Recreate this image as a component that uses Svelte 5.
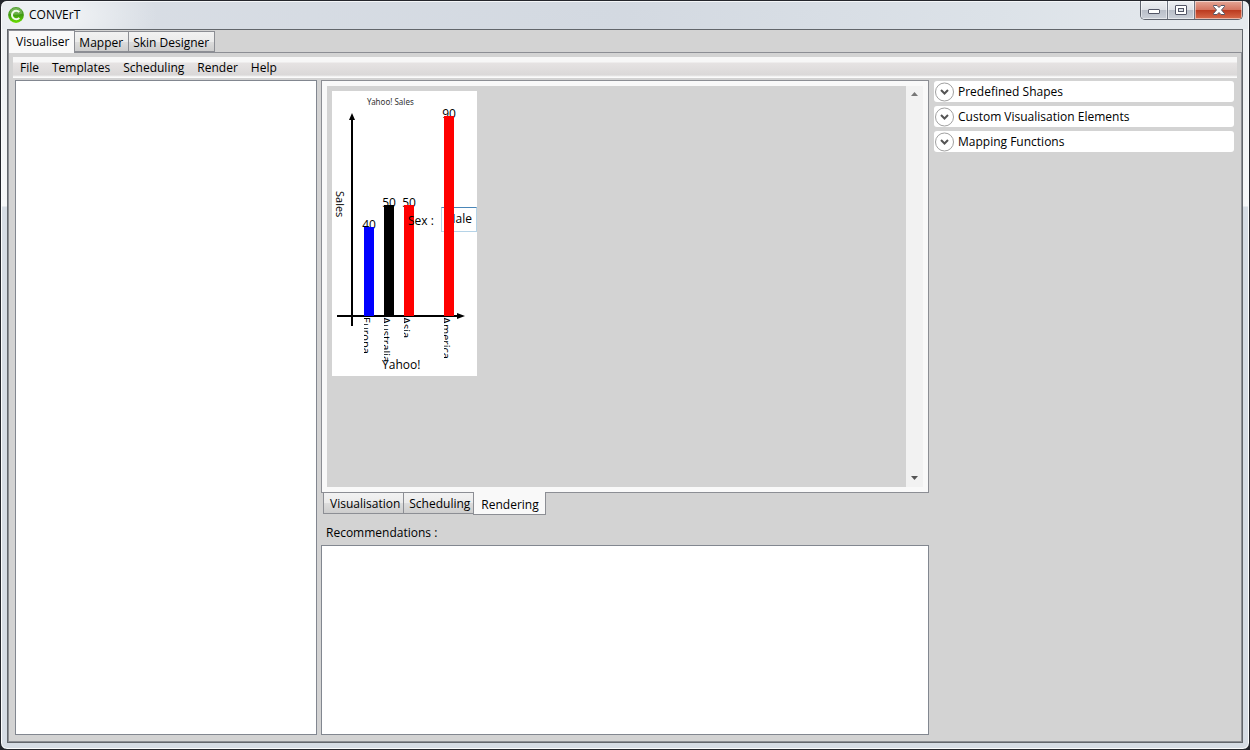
<script>
  let mainTab = $state('Visualiser');
  let viewTab = $state('Rendering');
  let sex = $state('Male');

  const mainTabs = ['Visualiser', 'Mapper', 'Skin Designer'];
  const viewTabs = ['Visualisation', 'Scheduling', 'Rendering'];
  const menus = ['File', 'Templates', 'Scheduling', 'Render', 'Help'];
  const groups = ['Predefined Shapes', 'Custom Visualisation Elements', 'Mapping Functions'];
  const bars = [
    { name: 'Europa', value: 40, x: 32, top: 136, color: '#0000ff' },
    { name: 'Australia', value: 50, x: 52, top: 114, color: '#000000' },
    { name: 'Asia', value: 50, x: 72, top: 114, color: '#ff0000' },
    { name: 'America', value: 90, x: 112, top: 25, color: '#ff0000' }
  ];
</script>

<div class="window">
  <header class="titlebar">
    <svg class="logo" width="16" height="16" viewBox="0 0 16 16" aria-hidden="true">
      <defs>
        <linearGradient id="ball" x1="0" y1="0" x2="0" y2="1">
          <stop offset="0" stop-color="#4f9e2c" />
          <stop offset="0.5" stop-color="#3f9a10" />
          <stop offset="1" stop-color="#6be000" />
        </linearGradient>
      </defs>
      <circle cx="8" cy="8" r="7.9" fill="url(#ball)" />
      <path d="M1.500 6.500a6.600 6.600 0 0 1 13 0q-6.500 2.500-13 0z" fill="#fff" opacity=".22" />
      <path d="M11.300 5.200A4.200 4.200 0 1 0 11.300 10.800" fill="none" stroke="#f2faec" stroke-width="2" />
    </svg>
    <h1>CONVErT</h1>
    <div class="caption">
      <button aria-label="Minimise">
        <svg width="14" height="12" viewBox="0 0 14 12"><rect x="1.500" y="5.500" width="11" height="4" rx="0.500" fill="#fff" stroke="#535666" /></svg>
      </button>
      <button aria-label="Maximise">
        <svg width="14" height="12" viewBox="0 0 14 12"><rect x="1.500" y="1.500" width="11" height="9" rx="0.500" fill="#fff" stroke="#535666" /><rect x="4.500" y="4.500" width="5" height="3" fill="#dde1e7" stroke="#535666" /></svg>
      </button>
      <button class="close" aria-label="Close">
        <svg width="14" height="12" viewBox="0 0 14 12"><path d="M1.500 1.500h3.500l2 2 2-2h3.500v1L9.500 6l3 3.500v1H9l-2-2-2 2H1.500v-1l3-3.500-3-3.500z" fill="#fff" stroke="#535666" /></svg>
      </button>
    </div>
  </header>

  <main class="client">
    <div class="tabs" role="tablist">
      {#each mainTabs as t}
        <button role="tab" class="tab" class:active={mainTab === t} aria-selected={mainTab === t} onclick={() => (mainTab = t)}>{t}</button>
      {/each}
    </div>

    <div class="page">
      <nav class="menu">
        {#each menus as m}<button>{m}</button>{/each}
      </nav>

      <div class="columns">
        <section class="box" aria-label="Model"></section>

        <section class="center">
          <div class="viewer">
            <div class="canvas">
              <div class="chart">
                <svg class="layer" width="145" height="285" viewBox="0 0 145 285">
                  <defs>
                    {#each bars as b, i}
                      <clipPath id="name{i}"><rect x={b.x} y="226" width="20" height="59" /></clipPath>
                    {/each}
                  </defs>
                  <text class="small" x="35" y="14">Yahoo! Sales</text>
                  <text class="axis" transform="translate(4 100) rotate(90)">Sales</text>
                  <path d="M20 28V235M5 225H127" stroke="#000" stroke-width="2" />
                  <path d="M20 22l3 7h-6zM133 225l-8-3v6z" />
                  {#each bars as b, i}
                    <text class="label" x={b.x + 5} y={b.top + 2} text-anchor="middle">{b.value}</text>
                    <g clip-path="url(#name{i})">
                      <text class="axis" transform="translate({b.x - 2} 226) rotate(90)">{b.name}</text>
                    </g>
                  {/each}
                  <text class="label" x="50" y="278">Yahoo!</text>
                </svg>
                <input id="sex" bind:value={sex} />
                <svg class="layer bars" width="145" height="285" viewBox="0 0 145 285" aria-hidden="true">
                  {#each bars as b}
                    <rect x={b.x} y={b.top} width="10" height={225 - b.top} fill={b.color} />
                  {/each}
                </svg>
                <label for="sex">Sex :</label>
              </div>
            </div>
            <div class="scroll">
              <svg width="7" height="4" viewBox="0 0 7 4"><path d="M0 4L3.500 0 7 4z" fill="#777" /></svg>
              <svg width="7" height="4" viewBox="0 0 7 4"><path d="M0 0L3.500 4 7 0z" fill="#555" /></svg>
            </div>
          </div>
          <div class="tabs under" role="tablist">
            {#each viewTabs as t}
              <button role="tab" class="tab" class:active={viewTab === t} aria-selected={viewTab === t} onclick={() => (viewTab = t)}>{t}</button>
            {/each}
          </div>
          <h2>Recommendations :</h2>
          <div class="box recommendations"></div>
        </section>

        <aside>
          {#each groups as g}
            <button class="expander">
              <svg width="20" height="20" viewBox="0 0 20 20" aria-hidden="true"><circle cx="10.500" cy="10" r="9" fill="#fff" stroke="#a0a0a0" /><path d="M7 8L10.500 11.500 14 8" fill="none" stroke="#555" stroke-width="2" /></svg>
              {g}
            </button>
          {/each}
        </aside>
      </div>
    </div>
  </main>
</div>

<style>
  :global(body) { margin: 0; background: #23252c; }
  * { box-sizing: border-box; }
  .window {
    display: flex;
    flex-direction: column;
    min-height: 100vh;
    padding: 0 6px 6px;
    border: 1px solid #24262c;
    border-radius: 7px;
    background: linear-gradient(#eceff2, #f6f7f8 205px, #d6dce4 206px);
    box-shadow: inset 0 0 0 1px #fbfcfd;
    font: 12px/16px "Open Sans", "Noto Sans", sans-serif;
    color: #000;
  }
  button { font: inherit; color: inherit; margin: 0; cursor: default; }
  h1, h2 { margin: 0; font: inherit; }
  .titlebar {
    display: flex;
    align-items: center;
    height: 28px;
    margin: 0 -5px;
    padding: 0 5px 0 6px;
    border-radius: 6px 6px 0 0;
    background: radial-gradient(ellipse 110px 50px at 45px 14px, #edf0f3 30%, transparent), linear-gradient(90deg, #d9dee5, #d3d9e1 50%, #dce2e8 80%, #e6eaee);
    box-shadow: inset 0 1px #f4f6f8;
  }
  h1 { margin-left: 5px; }
  .caption {
    display: flex;
    align-self: flex-start;
    margin-left: auto;
    border: 1px solid #5d626c;
    border-top: 0;
    border-radius: 0 0 5px 5px;
    overflow: hidden;
  }
  .caption button {
    display: grid;
    place-items: center;
    width: 27px;
    height: 18px;
    padding: 0;
    border: 0;
    border-right: 1px solid #6f7581;
    background: linear-gradient(#eef0f3, #dde0e5 50%, #b9bec8 51%, #cbd0d8);
    box-shadow: inset 0 0 0 1px rgb(255 255 255 / 50%);
  }
  .caption .close {
    width: 47px;
    border: 0;
    background: linear-gradient(#e5a797, #d4745f 50%, #bb3a1f 51%, #d86b4b);
  }
  .client {
    flex: 1;
    display: flex;
    flex-direction: column;
    border: 1px solid #62666b;
    background: #d3d3d3;
  }
  .tabs { display: flex; align-items: flex-end; padding-top: 1px; }
  .tab {
    height: 21px;
    margin-left: -1px;
    padding: 2px 5px 0 4px;
    border: 1px solid #8c8e94;
    background: linear-gradient(#f2f2f2, #ebebeb 50%, #dddddd 51%, #cdcdcd);
    white-space: nowrap;
  }
  .tab.active {
    position: relative;
    z-index: 1;
    height: 23px;
    margin-bottom: -1px;
    padding: 0 5px 0 7px;
    border-bottom: 0;
    background: #f9f9f9;
  }
  .tabs:not(.under) { height: 22px; }
  .tabs:not(.under) .tab:first-child { margin-left: 0; }
  .page {
    flex: 1;
    display: flex;
    flex-direction: column;
    padding: 4px;
    border: 1px solid #8c8e94;
  }
  .menu {
    display: flex;
    height: 21px;
    padding-left: 7px;
    gap: 13px;
    background: linear-gradient(#f7f7f7 5px, #e6e3e3 6px, #dad8d8 18px, #fbfbfb 20px);
  }
  .menu button { padding: 0; border: 0; background: none; }
  .columns {
    flex: 1;
    display: grid;
    grid-template-columns: 302px minmax(0, 1fr) 300px;
    column-gap: 4px;
    padding: 2px 3px 2px 2px;
  }
  .box { border: 1px solid #828790; background: #fff; }
  .center { display: flex; flex-direction: column; margin-right: 1px; }
  .viewer {
    flex: 401 0 0;
    display: flex;
    padding: 5px;
    border: 1px solid #8c8e94;
    background: #f9f9f9;
  }
  .canvas { flex: 1; padding: 5px; background: #d3d3d3; }
  .chart { position: relative; width: 145px; height: 285px; background: #fff; }
  .layer { position: absolute; inset: 0; }
  .bars { pointer-events: none; }
  .label { font-size: 12px; }
  .axis { font-size: 11px; }
  .small { font-family: "Noto Sans", sans-serif; font-size: 8px; fill: #333; }
  .chart input {
    position: absolute;
    left: 109px;
    top: 116px;
    width: 36px;
    height: 25px;
    padding: 0 4px 2px 0;
    border: 1px solid #b5d3e7;
    border-top-color: #4a86b8;
    background: #fff;
    font: inherit;
    text-align: right;
  }
  .chart label { position: absolute; left: 76px; top: 122px; }
  .scroll {
    display: flex;
    flex-direction: column;
    justify-content: space-between;
    align-items: center;
    width: 17px;
    padding: 6px 0 7px;
    background: #f2f2f2;
  }
  .under { align-items: flex-start; height: 23px; margin-top: -1px; padding: 0 0 0 3px; }
  .under .tab { height: 22px; padding: 2px 3px 0 5px; }
  .under .tab:first-child { padding-left: 6px; }
  .under .tab.active { height: 23px; margin-bottom: 0; padding: 3px 6px 0 7px; border: 1px solid #8c8e94; border-top: 0; }
  .under .tab { margin-left: -1px; }
  h2 { padding: 10px 5px 4px; }
  .recommendations { flex: 188 0 0; }
  aside { display: flex; flex-direction: column; gap: 4px; padding-top: 1px; }
  .expander {
    display: flex;
    align-items: center;
    gap: 4px;
    height: 21px;
    padding: 0;
    border: 0;
    border-radius: 3px;
    background: #fff;
  }
</style>
